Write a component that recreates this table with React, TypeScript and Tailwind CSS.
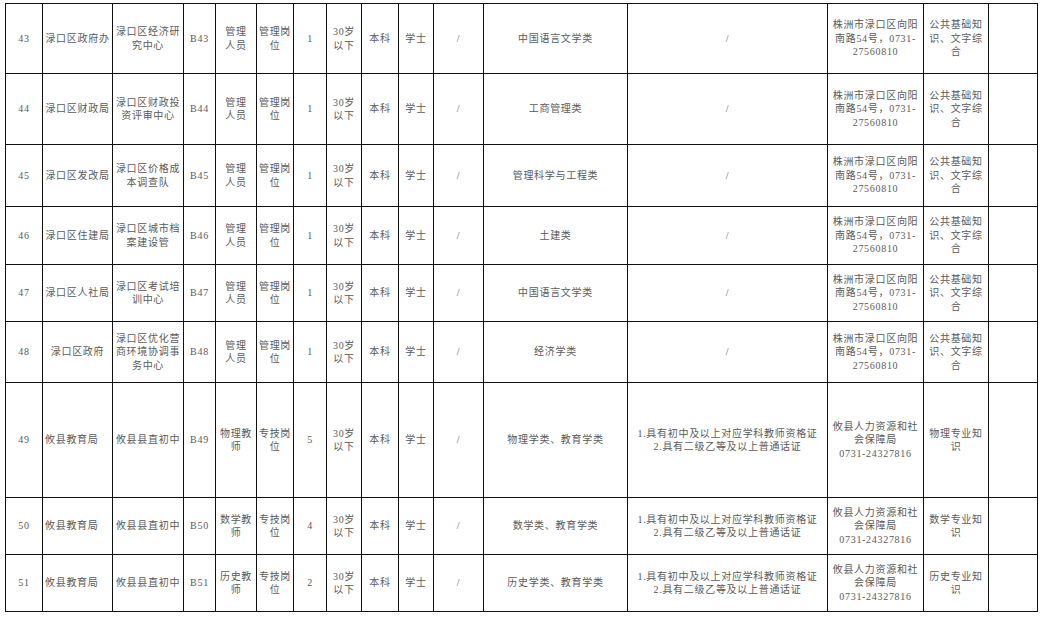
type Cell = { lines: string[]; left?: boolean }

const c = (s: string, left = false): Cell => ({ lines: s.split("|"), left })

const ZHUZHOU = "株洲市渌口区向阳|南路54号，0731-|27560810"
const GONGGONG = "公共基础知|识、文字综|合"
const YOUXIAN = "攸县人力资源和社|会保障局|0731-24327816"
const TEACHER = "1.具有初中及以上对应学科教师资格证|2.具有二级乙等及以上普通话证"

const rows: { h: string; cells: Cell[] }[] = [
  {
    h: "h-[69px]",
    cells: [c("43"), c("渌口区政府办"), c("渌口区经济研|究中心"), c("B43"), c("管理|人员"), c("管理岗|位"), c("1"), c("30岁|以下"), c("本科"), c("学士"), c("/"), c("中国语言文学类"), c("/"), c(ZHUZHOU), c(GONGGONG), c("")],
  },
  {
    h: "h-[70px]",
    cells: [c("44"), c("渌口区财政局"), c("渌口区财政投|资评审中心"), c("B44"), c("管理|人员"), c("管理岗|位"), c("1"), c("30岁|以下"), c("本科"), c("学士"), c("/"), c("工商管理类"), c("/"), c(ZHUZHOU), c(GONGGONG), c("")],
  },
  {
    h: "h-[61px]",
    cells: [c("45"), c("渌口区发改局"), c("渌口区价格成|本调查队"), c("B45"), c("管理|人员"), c("管理岗|位"), c("1"), c("30岁|以下"), c("本科"), c("学士"), c("/"), c("管理科学与工程类"), c("/"), c(ZHUZHOU), c(GONGGONG), c("")],
  },
  {
    h: "h-[57px]",
    cells: [c("46"), c("渌口区住建局"), c("渌口区城市档|案建设管"), c("B46"), c("管理|人员"), c("管理岗|位"), c("1"), c("30岁|以下"), c("本科"), c("学士"), c("/"), c("土建类"), c("/"), c(ZHUZHOU), c(GONGGONG), c("")],
  },
  {
    h: "h-[56px]",
    cells: [c("47"), c("渌口区人社局"), c("渌口区考试培|训中心"), c("B47"), c("管理|人员"), c("管理岗|位"), c("1"), c("30岁|以下"), c("本科"), c("学士"), c("/"), c("中国语言文学类"), c("/"), c(ZHUZHOU), c(GONGGONG), c("")],
  },
  {
    h: "h-[60px]",
    cells: [c("48"), c("渌口区政府"), c("渌口区优化营|商环境协调事|务中心"), c("B48"), c("管理|人员"), c("管理岗|位"), c("1"), c("30岁|以下"), c("本科"), c("学士"), c("/"), c("经济学类"), c("/"), c(ZHUZHOU), c(GONGGONG), c("")],
  },
  {
    h: "h-[114px]",
    cells: [c("49"), c("攸县教育局", true), c("攸县县直初中"), c("B49"), c("物理教|师"), c("专技岗|位"), c("5"), c("30岁|以下"), c("本科"), c("学士"), c("/"), c("物理学类、教育学类"), c(TEACHER), c(YOUXIAN), c("物理专业知|识"), c("")],
  },
  {
    h: "h-[56px]",
    cells: [c("50"), c("攸县教育局", true), c("攸县县直初中"), c("B50"), c("数学教|师"), c("专技岗|位"), c("4"), c("30岁|以下"), c("本科"), c("学士"), c("/"), c("数学类、教育学类"), c(TEACHER), c(YOUXIAN), c("数学专业知|识"), c("")],
  },
  {
    h: "h-[56px]",
    cells: [c("51"), c("攸县教育局", true), c("攸县县直初中"), c("B51"), c("历史教|师"), c("专技岗|位"), c("2"), c("30岁|以下"), c("本科"), c("学士"), c("/"), c("历史学类、教育学类"), c(TEACHER), c(YOUXIAN), c("历史专业知|识"), c("")],
  },
]

export default function App() {
  return (
    <div className="h-[617px] w-[1043px] overflow-hidden bg-white pl-[5px] pt-[3px]">
      <div
        className="inline-grid grid-cols-[36px_69px_70px_31px_40px_36px_32px_34px_36px_34px_49px_143px_199px_95px_64px_48px] gap-px border border-[#111] bg-[#111] text-[10px] leading-[13.5px] tracking-[0.7px] text-[#5a5a5a]"
        style={{ fontFamily: '"Liberation Serif", "Noto Sans CJK SC", serif' }}
      >
        {rows.map((row, ri) =>
          row.cells.map((cell, ci) => (
            <div
              key={`${ri}-${ci}`}
              className={`flex ${row.h} flex-col justify-center bg-white px-[1px] ${cell.left ? "items-start pl-[2px]" : "items-center text-center"}`}
            >
              {cell.lines.map((l, li) => (
                <span key={li} className="whitespace-nowrap">
                  {l}
                </span>
              ))}
            </div>
          ))
        )}
      </div>
    </div>
  )
}
